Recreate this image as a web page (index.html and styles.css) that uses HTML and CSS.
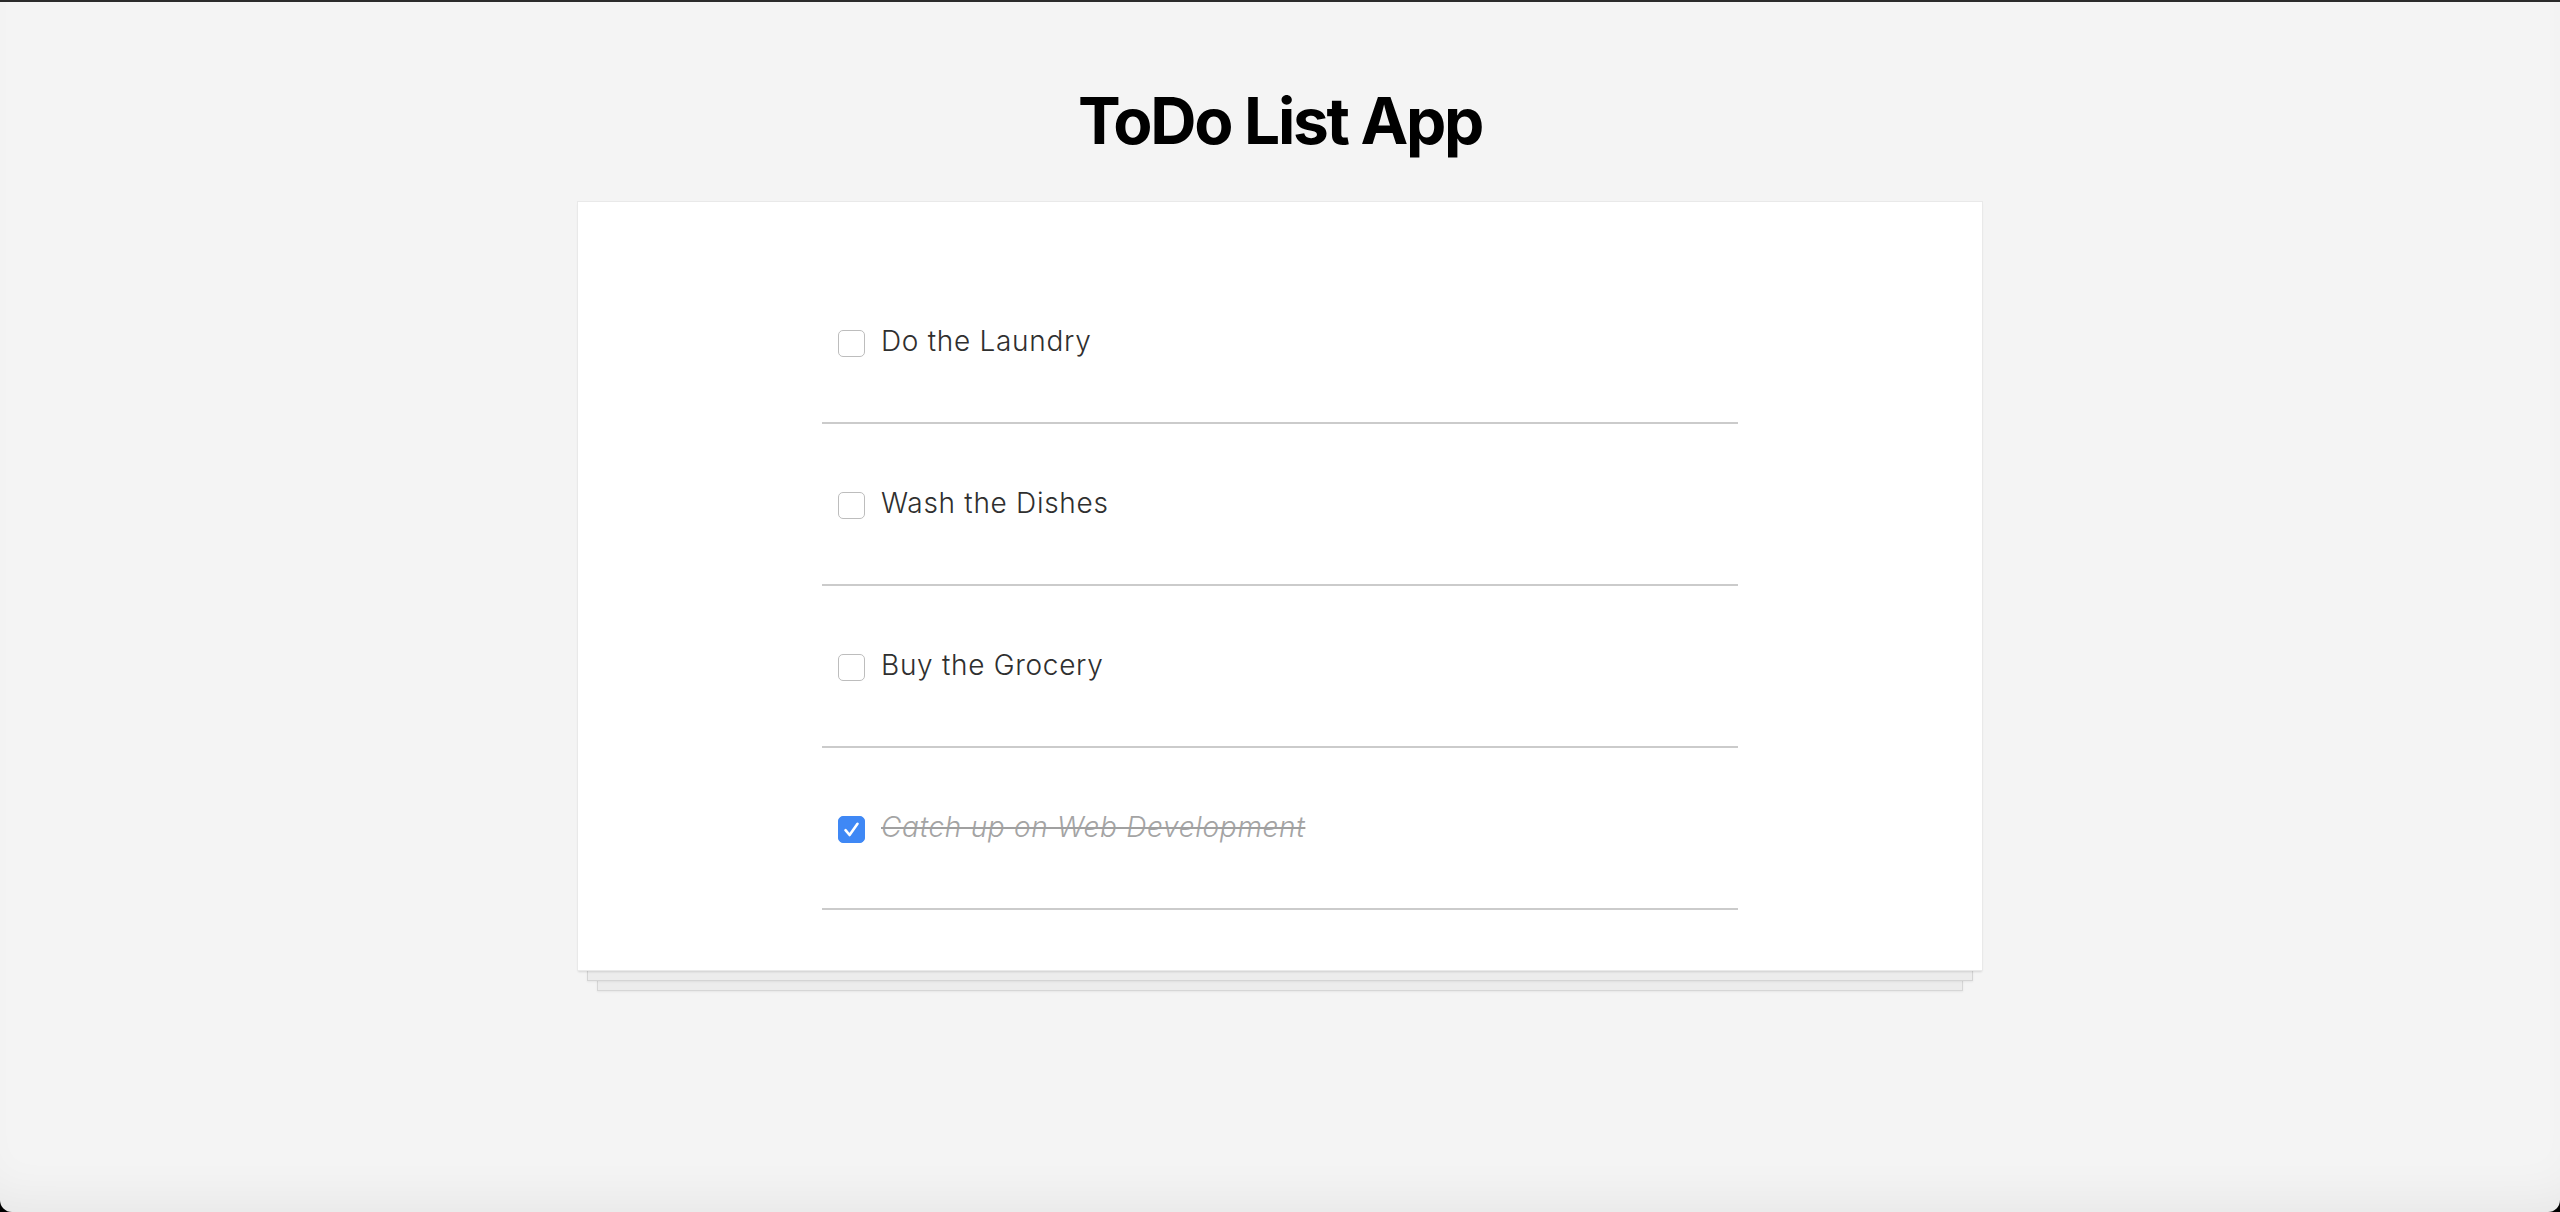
FILE: index.html
```html
<!DOCTYPE html>
<html lang="en">
<head>
<meta charset="utf-8">
<title>ToDo List App</title>
<link rel="stylesheet" href="styles.css">
</head>
<body>
<div class="window">
  <h1 class="title">ToDo List App</h1>
  <div class="card">
    <ul class="list">
      <li class="item"><span class="check"></span><span class="label">Do the Laundry</span></li>
      <li class="item"><span class="check"></span><span class="label">Wash the Dishes</span></li>
      <li class="item"><span class="check"></span><span class="label">Buy the Grocery</span></li>
      <li class="item done"><span class="check checked"><svg viewBox="0 0 27 27" width="27" height="27"><path d="M7.5 14.2 L11.6 19 L19.5 7.8" fill="none" stroke="#fff" stroke-width="2.6" stroke-linecap="round" stroke-linejoin="round"/></svg></span><span class="label">Catch up on Web Development</span></li>
    </ul>
  </div>
</div>
</body>
</html>
```
FILE: styles.css
```css
html {
  background: #000;
}
body {
  margin: 0;
  font-family: Inter, "Liberation Sans", sans-serif;
}
.window {
  box-sizing: border-box;
  height: 1212px;
  background: #f4f4f4;
  border-top: 2px solid #2b2b2b;
  border-radius: 0 0 12px 12px;
  overflow: hidden;
  padding-top: 87px;
  box-shadow: inset 0 -40px 50px -30px rgba(0, 0, 0, 0.06);
}
.title {
  margin: 0;
  text-align: center;
  font-size: 64px;
  line-height: 64px;
  font-weight: 700;
  letter-spacing: -2.3px;
  color: #000;
}
.card {
  width: 1404px;
  margin: 49px auto 0;
  padding: 60px 0;
  background: #fff;
  box-shadow:
    0 0 0 1px #e9e9e9,
    0 2px 2px rgba(0, 0, 0, 0.12),
    0 20px 0 -10px #ececec,
    0 20px 0 -9px #d4d4d4,
    0 21px 2px -9px rgba(0, 0, 0, 0.06),
    0 40px 0 -20px #ececec,
    0 40px 0 -19px #d6d6d6,
    0 41px 2px -19px rgba(0, 0, 0, 0.06);
}
.list {
  list-style: none;
  margin: 0 auto;
  padding: 0;
  width: 916px;
}
.item {
  height: 160px;
  border-bottom: 2px solid #cbcbcb;
  display: flex;
  align-items: center;
  gap: 16px;
  padding-left: 16px;
}
.check {
  box-sizing: border-box;
  width: 27px;
  height: 27px;
  flex: none;
  border: 1.5px solid #bdbdbd;
  border-radius: 5px;
  background: #fff;
  margin-top: 3px;
  display: flex;
}
.check.checked {
  background: #3f88f5;
  border-color: #3f88f5;
  align-items: center;
  justify-content: center;
}
.check.checked svg {
  flex: none;
}
.label {
  font-size: 28px;
  font-weight: 300;
  letter-spacing: 0.7px;
  line-height: 32px;
  margin-top: -2px;
  color: #2f2f2f;
}
.done .label {
  color: #a4a4a4;
  font-style: italic;
  text-decoration: line-through;
  text-decoration-thickness: 2px;
  text-decoration-color: #a0a0a0;
}
```
